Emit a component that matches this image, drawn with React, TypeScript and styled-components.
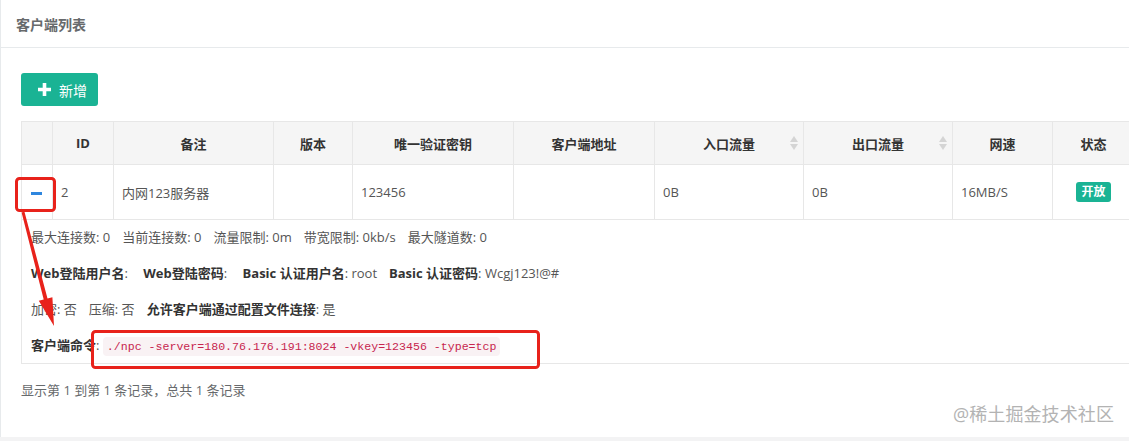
import React from "react";
import styled, { createGlobalStyle } from "styled-components";

const GlobalStyle = createGlobalStyle`
  html, body {
    margin: 0;
    padding: 0;
    background: #ffffff;
  }
  body {
    font-family: "Open Sans", "Noto Sans CJK SC", sans-serif;
    font-size: 13px;
    color: #676a6c;
  }
`;

const Page = styled.div`
  position: relative;
  width: 1129px;
  height: 441px;
  overflow: hidden;
  background: #f3f3f4;
`;

const Panel = styled.div`
  height: 437px;
  background: #fff;
  border-left: 1px solid #e7eaec;
  box-sizing: border-box;
  overflow: hidden;
`;

const PanelTitle = styled.div`
  height: 47px;
  display: flex;
  align-items: center;
  padding: 0 15px;
  border-bottom: 1px solid #e7eaec;
  font-size: 14px;
  font-weight: 600;
  color: #676a6c;
`;

const PanelBody = styled.div`
  padding: 25px 0 0 20px;
`;

const AddButton = styled.button`
  display: flex;
  align-items: center;
  gap: 7px;
  height: 33px;
  width: 77px;
  padding: 0 0 0 16px;
  border: none;
  border-radius: 3px;
  background: #1ab394;
  color: #fff;
  font-family: inherit;
  font-size: 14px;
  cursor: pointer;
`;

const Table = styled.table`
  margin-top: 15px;
  width: 1113px;
  table-layout: fixed;
  border-collapse: collapse;
  font-size: 13px;
`;

const Th = styled.th`
  position: relative;
  height: 42px;
  padding: 0;
  background: #f5f5f5;
  border: 1px solid #e7e7e7;
  color: #333;
  font-weight: 700;
  text-align: center;
`;

const Td = styled.td<{ $center?: boolean }>`
  height: 54px;
  padding: 0 8px;
  border: 1px solid #e7e7e7;
  color: #555;
  text-align: ${p => (p.$center ? "center" : "left")};
  white-space: nowrap;
`;

const SortIcon = styled.svg`
  position: absolute;
  right: 5px;
  top: 14px;
`;

const Minus = styled.span`
  display: inline-block;
  width: 11px;
  height: 3px;
  margin-left: 1px;
  background: #2e86de;
  vertical-align: middle;
`;

const Badge = styled.span`
  display: inline-block;
  padding: 2px 5px;
  border-radius: 3px;
  background: #1ab394;
  color: #fff;
  font-size: 12px;
  font-weight: 700;
  line-height: 16px;
`;

const DetailCell = styled.td`
  padding: 7px 9px 8px;
  border: 1px solid #e7e7e7;
  border-right: none;
  color: #555;
`;

const DetailLines = styled.div`
  display: flex;
  flex-direction: column;
  gap: 16px;
`;

const Line = styled.div`
  height: 20px;
  line-height: 20px;
  white-space: nowrap;
`;

const Item = styled.span`
  margin-right: 12px;
`;

const Label = styled.span<{ $bold?: boolean }>`
  font-weight: ${p => (p.$bold ? 700 : 400)};
  color: ${p => (p.$bold ? "#333" : "#555")};
`;

const Code = styled.code`
  padding: 3px 4px;
  border-radius: 4px;
  background: #f9f2f4;
  color: #c7254e;
  font-family: "Liberation Mono", "DejaVu Sans Mono", monospace;
  font-size: 11.6px;
`;

const Footer = styled.div`
  margin-top: 16px;
  line-height: 20px;
  color: #676a6c;
`;

const Watermark = styled.div`
  position: absolute;
  right: 15px;
  bottom: 15px;
  font-size: 18px;
  color: #b3b3b3;
  letter-spacing: 0.1px;
`;

const Annotations = styled.svg`
  position: absolute;
  left: 0;
  top: 0;
  pointer-events: none;
`;

const columns = [
  { title: "", width: 31 },
  { title: "ID", width: 61 },
  { title: "备注", width: 160 },
  { title: "版本", width: 79 },
  { title: "唯一验证密钥", width: 161 },
  { title: "客户端地址", width: 141 },
  { title: "入口流量", width: 149, sortable: true },
  { title: "出口流量", width: 149, sortable: true },
  { title: "网速", width: 100 },
  { title: "状态", width: 82 },
];

const Sort = () => (
  <SortIcon width="8" height="14" viewBox="0 0 8 14">
    <path d="M4 0 L8 6 L0 6 Z" fill="#d4d4d4" />
    <path d="M4 14 L8 8 L0 8 Z" fill="#d4d4d4" />
  </SortIcon>
);

const PlusIcon = () => (
  <svg width="15" height="15" viewBox="0 0 15 15">
    <path d="M7.5 1 V14 M1 7.5 H14" stroke="#fff" strokeWidth="3.6" />
  </svg>
);

const App: React.FC = () => {
  return (
    <Page>
      <GlobalStyle />
      <Panel>
        <PanelTitle>客户端列表</PanelTitle>
        <PanelBody>
          <AddButton>
            <PlusIcon />
            新增
          </AddButton>
          <Table>
            <colgroup>
              {columns.map((c, i) => (
                <col key={i} style={{ width: c.width }} />
              ))}
            </colgroup>
            <thead>
              <tr>
                {columns.map((c, i) => (
                  <Th key={i}>
                    {c.title}
                    {c.sortable && <Sort />}
                  </Th>
                ))}
              </tr>
            </thead>
            <tbody>
              <tr>
                <Td>
                  <Minus />
                </Td>
                <Td>2</Td>
                <Td>内网123服务器</Td>
                <Td></Td>
                <Td>123456</Td>
                <Td></Td>
                <Td>0B</Td>
                <Td>0B</Td>
                <Td>16MB/S</Td>
                <Td $center>
                  <Badge>开放</Badge>
                </Td>
              </tr>
              <tr>
                <DetailCell colSpan={10}>
                  <DetailLines>
                    <Line>
                      <Item><Label>最大连接数</Label>: 0</Item>
                      <Item><Label>当前连接数</Label>: 0</Item>
                      <Item><Label>流量限制</Label>: 0m</Item>
                      <Item><Label>带宽限制</Label>: 0kb/s</Item>
                      <Item><Label>最大隧道数</Label>: 0</Item>
                    </Line>
                    <Line>
                      <Item><Label $bold>Web登陆用户名</Label>: </Item>
                      <Item><Label $bold>Web登陆密码</Label>: </Item>
                      <Item><Label $bold>Basic 认证用户名</Label>: root</Item>
                      <Item><Label $bold>Basic 认证密码</Label>: Wcgj123!@#</Item>
                    </Line>
                    <Line>
                      <Item><Label>加密</Label>: 否</Item>
                      <Item><Label>压缩</Label>: 否</Item>
                      <Item><Label $bold>允许客户端通过配置文件连接</Label>: 是</Item>
                    </Line>
                    <Line>
                      <Label $bold>客户端命令</Label>:{" "}
                      <Code>./npc -server=180.76.176.191:8024 -vkey=123456 -type=tcp</Code>
                    </Line>
                  </DetailLines>
                </DetailCell>
              </tr>
            </tbody>
          </Table>
          <Footer>显示第 1 到第 1 条记录，总共 1 条记录</Footer>
        </PanelBody>
      </Panel>
      <Watermark>@稀土掘金技术社区</Watermark>
      <Annotations width="1129" height="441" viewBox="0 0 1129 441">
        <rect x="16.5" y="178.5" width="38" height="32" rx="3" fill="none" stroke="#e8221b" strokeWidth="3" />
        <rect x="92.5" y="331.5" width="446" height="36" rx="3" fill="none" stroke="#e8221b" strokeWidth="3" />
        <polygon
          points="21.6,212.4 24.4,211.6 47.5,298.5 52.4,297.2 54,326 38.8,300.8 43.7,299.5"
          fill="#e8221b"
        />
      </Annotations>
    </Page>
  );
};

export default App;
